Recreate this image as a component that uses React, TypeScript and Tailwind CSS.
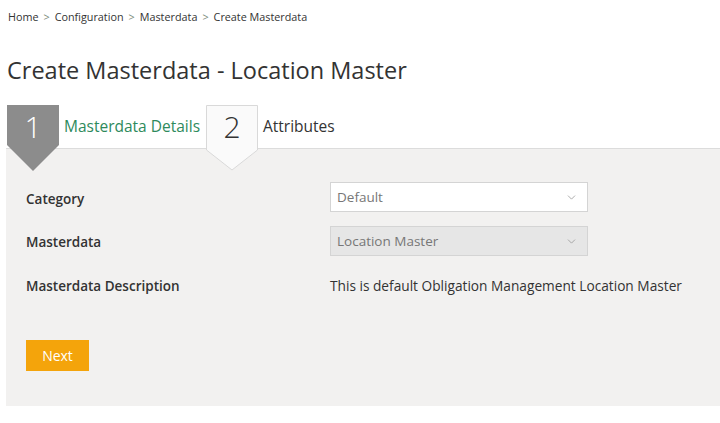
import { ChevronDown } from "lucide-react";

const font = "font-['Open_Sans','Noto_Sans',sans-serif]";

const crumbs = ["Home", "Configuration", "Masterdata", "Create Masterdata"];

function StepBadge({ n, active }: { n: number; active: boolean }) {
  return (
    <div className="relative z-10 h-[43px] w-[52px] shrink-0">
      <svg
        className="absolute left-0 top-0"
        width="52"
        height="66"
        viewBox="0 0 52 66"
      >
        {active ? (
          <polygon points="0,0 52,0 52,40 26,66 0,40" fill="#8c8c8c" />
        ) : (
          <polygon
            points="0.5,0.5 51.5,0.5 51.5,45 26,65 0.5,45"
            fill="#fafafa"
            stroke="#d9d9d9"
          />
        )}
      </svg>
      <span
        className={`absolute inset-x-0 top-[4px] text-center text-[30px] font-light leading-[36px] ${
          active ? "text-white" : "text-[#333]"
        }`}
      >
        {n}
      </span>
    </div>
  );
}

function Select({ value, disabled }: { value: string; disabled?: boolean }) {
  return (
    <div
      className={`flex h-[30px] w-[258px] items-center justify-between border px-[6px] ${
        disabled ? "border-[#d4d4d4] bg-[#e6e6e6]" : "border-[#d4d4d4] bg-white"
      }`}
    >
      <span className="text-[13.5px] text-[#777]">{value}</span>
      <ChevronDown className="mr-[3px] h-[13px] w-[13px] text-[#999]" strokeWidth={1.5} />
    </div>
  );
}

export default function App() {
  return (
    <div className={`${font} h-[423px] w-[720px] overflow-hidden bg-white text-[#333]`}>
      <nav className="flex items-center gap-[5px] px-[8px] pt-[9px] text-[10.8px] leading-[16px]">
        {crumbs.map((c, i) => (
          <span key={c} className="flex items-center gap-[5px]">
            {i > 0 && <span className="text-[#7a8a7a]">&gt;</span>}
            <span>{c}</span>
          </span>
        ))}
      </nav>

      <h1 className="mt-[30px] px-[7px] text-[23.5px] leading-[30px] text-[#333]">
        Create Masterdata - Location Master
      </h1>

      <div className="mt-[20px] ml-[6px]">
        <div className="flex h-[43px] items-center pl-[1px]">
          <StepBadge n={1} active />
          <span className="ml-[5px] w-[142px] whitespace-nowrap text-[15.5px] text-[#2e8a5c]">
            Masterdata Details
          </span>
          <StepBadge n={2} active={false} />
          <span className="ml-[5px] text-[15.5px] text-[#333]">Attributes</span>
        </div>

        <div className="h-[258px] border-t border-[#dcdcdc] bg-[#f2f1f0] px-[20px] pt-[33px]">
          <div className="grid grid-cols-[304px_1fr] items-center gap-y-[14px]">
            <span className="pt-[4px] text-[13.5px] font-semibold">Category</span>
            <Select value="Default" />
            <span className="pt-[2px] text-[13.5px] font-semibold">Masterdata</span>
            <Select value="Location Master" disabled />
            <span className="flex h-[30px] items-center pt-[3px] text-[13.5px] font-semibold">
              Masterdata Description
            </span>
            <span className="pt-[3px] text-[13.7px] text-[#333]">
              This is default Obligation Management Location Master
            </span>
          </div>

          <button className="mt-[40px] h-[31px] w-[63px] bg-[#f4a40b] text-[14px] text-white">
            Next
          </button>
        </div>
      </div>
    </div>
  );
}
